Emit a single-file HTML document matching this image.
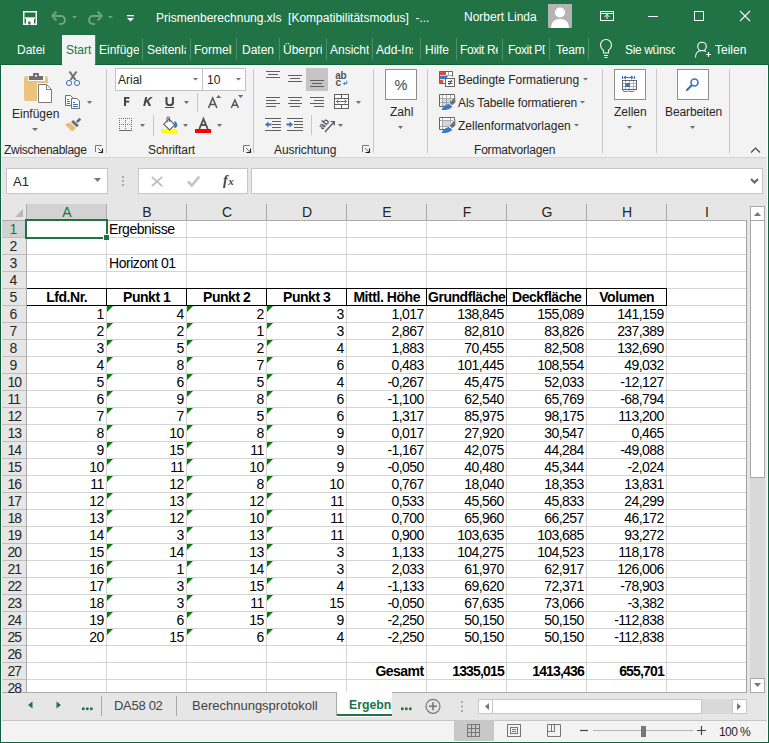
<!DOCTYPE html><html><head><meta charset="utf-8"><style>
*{margin:0;padding:0;box-sizing:border-box}
html,body{width:769px;height:743px;overflow:hidden;background:#e6e6e6;font-family:"Liberation Sans",sans-serif}
.ab{position:absolute}
.t{position:absolute;white-space:nowrap;line-height:1}
.clip{position:absolute;overflow:hidden;white-space:nowrap;line-height:1}
.c{position:absolute;font-size:13.33px;color:#000;white-space:nowrap;line-height:1}
.r{text-align:right}
.tri{position:absolute;width:0;height:0;border-top:6px solid #008000;border-right:6px solid transparent}
svg{position:absolute;left:0;top:0}
</style></head><body>

<div class="ab" style="left:0px;top:0px;width:769px;height:65px;background:#217346"></div>
<div class="ab" style="left:1px;top:65px;width:766px;height:92px;background:#f3f3f3"></div>
<div class="ab" style="left:1px;top:157px;width:766px;height:1px;background:#d5d5d5"></div>
<div class="ab" style="left:62px;top:35px;width:33px;height:30px;background:#f3f3f3"></div>
<div class="t" style="left:156px;top:12px;font-size:12px;color:#fff;">Prismenberechnung.xls&nbsp; [Kompatibilitätsmodus]&nbsp; -...</div>
<div class="t" style="left:464px;top:11px;font-size:12px;color:#fff;">Norbert Linda</div>
<div class="clip" style="left:17px;top:40px;padding-top:4px;width:43px;height:20px;font-size:12px;color:#fff;letter-spacing:0px">Datei</div>
<div class="clip" style="left:99px;top:40px;padding-top:4px;width:40px;height:20px;font-size:12px;color:#fff;letter-spacing:0px">Einfügen</div>
<div class="clip" style="left:147px;top:40px;padding-top:4px;width:39px;height:20px;font-size:12px;color:#fff;letter-spacing:0px">Seitenlayout</div>
<div class="clip" style="left:194px;top:40px;padding-top:4px;width:38px;height:20px;font-size:12px;color:#fff;letter-spacing:0px">Formeln</div>
<div class="clip" style="left:242px;top:40px;padding-top:4px;width:33px;height:20px;font-size:12px;color:#fff;letter-spacing:0px">Daten</div>
<div class="clip" style="left:283px;top:40px;padding-top:4px;width:39px;height:20px;font-size:12px;color:#fff;letter-spacing:0px">Überprüfen</div>
<div class="clip" style="left:330px;top:40px;padding-top:4px;width:39px;height:20px;font-size:12px;color:#fff;letter-spacing:0px">Ansicht</div>
<div class="clip" style="left:376px;top:40px;padding-top:4px;width:37px;height:20px;font-size:12px;color:#fff;letter-spacing:0px">Add-Ins</div>
<div class="clip" style="left:425px;top:40px;padding-top:4px;width:27px;height:20px;font-size:12px;color:#fff;letter-spacing:0px">Hilfe</div>
<div class="clip" style="left:460px;top:40px;padding-top:4px;width:38px;height:20px;font-size:12px;color:#fff;letter-spacing:-0.4px">Foxit Reader</div>
<div class="clip" style="left:508px;top:40px;padding-top:4px;width:37px;height:20px;font-size:12px;color:#fff;letter-spacing:-0.5px">Foxit PDF</div>
<div class="clip" style="left:556px;top:40px;padding-top:4px;width:29px;height:20px;font-size:12px;color:#fff;letter-spacing:-0.2px">Team</div>
<div class="t" style="left:66px;top:44px;font-size:12px;color:#217346;">Start</div>
<div class="ab" style="left:142px;top:38px;width:1px;height:22px;background:#4d8f6b"></div>
<div class="ab" style="left:190px;top:38px;width:1px;height:22px;background:#4d8f6b"></div>
<div class="ab" style="left:236px;top:38px;width:1px;height:22px;background:#4d8f6b"></div>
<div class="ab" style="left:279px;top:38px;width:1px;height:22px;background:#4d8f6b"></div>
<div class="ab" style="left:326px;top:38px;width:1px;height:22px;background:#4d8f6b"></div>
<div class="ab" style="left:372px;top:38px;width:1px;height:22px;background:#4d8f6b"></div>
<div class="ab" style="left:420px;top:38px;width:1px;height:22px;background:#4d8f6b"></div>
<div class="ab" style="left:456px;top:38px;width:1px;height:22px;background:#4d8f6b"></div>
<div class="ab" style="left:502px;top:38px;width:1px;height:22px;background:#4d8f6b"></div>
<div class="ab" style="left:549px;top:38px;width:1px;height:22px;background:#4d8f6b"></div>
<div class="ab" style="left:588px;top:38px;width:1px;height:22px;background:#4d8f6b"></div>
<div class="clip" style="left:625px;top:40px;padding-top:4px;width:50px;height:20px;font-size:12px;color:#fff;letter-spacing:-0.35px">Sie wünschen</div>
<div class="t" style="left:715px;top:44px;font-size:12px;color:#fff;">Teilen</div>
<div class="ab" style="left:106px;top:69px;width:1px;height:84px;background:#c8c8c8"></div>
<div class="ab" style="left:253px;top:69px;width:1px;height:84px;background:#c8c8c8"></div>
<div class="ab" style="left:373px;top:69px;width:1px;height:84px;background:#c8c8c8"></div>
<div class="ab" style="left:427px;top:69px;width:1px;height:84px;background:#c8c8c8"></div>
<div class="ab" style="left:602px;top:69px;width:1px;height:84px;background:#c8c8c8"></div>
<div class="ab" style="left:656px;top:69px;width:1px;height:84px;background:#c8c8c8"></div>
<div class="ab" style="left:729px;top:69px;width:1px;height:84px;background:#c8c8c8"></div>
<div class="t" style="left:12px;top:108px;font-size:12px;color:#262626;">Einfügen</div>
<div class="t" style="left:4px;top:144px;font-size:12px;color:#262626;letter-spacing:-0.3px">Zwischenablage</div>
<div class="ab" style="left:115px;top:68px;width:131px;height:23px;background:#fff;border:1px solid #c1c1c1"></div>
<div class="ab" style="left:202px;top:68px;width:1px;height:23px;background:#c1c1c1"></div>
<div class="t" style="left:118px;top:74px;font-size:12px;color:#262626;">Arial</div>
<div class="t" style="left:207px;top:74px;font-size:12px;color:#262626;">10</div>
<div class="ab" style="left:165px;top:107px;width:9px;height:1px;background:#444"></div>
<div class="ab" style="left:197px;top:93px;width:1px;height:19px;background:#c8c8c8"></div>
<div class="ab" style="left:119px;top:130px;width:13px;height:1px;background:#6b6b6b"></div>
<div class="ab" style="left:153px;top:115px;width:1px;height:21px;background:#c8c8c8"></div>
<div class="ab" style="left:161px;top:129px;width:16px;height:4px;background:#ffff00"></div>
<div class="ab" style="left:195px;top:129px;width:16px;height:4px;background:#ff0000"></div>
<div class="t" style="left:148px;top:144px;font-size:12px;color:#262626;letter-spacing:-0.1px">Schriftart</div>
<div class="ab" style="left:306px;top:68px;width:22px;height:23px;background:#c5c5c5"></div>
<div class="ab" style="left:311px;top:115px;width:1px;height:20px;background:#c8c8c8"></div>
<div class="t" style="left:274px;top:144px;font-size:12px;color:#262626;letter-spacing:-0.1px">Ausrichtung</div>
<div class="ab" style="left:385px;top:69px;width:32px;height:31px;background:#fff;border:1px solid #8f8f8f"></div>
<div class="t" style="left:394.5px;top:78px;font-size:14.5px;color:#444;">%</div>
<div class="t" style="left:390px;top:106px;font-size:12px;color:#262626;">Zahl</div>
<div class="t" style="left:458px;top:74px;font-size:12px;color:#262626;letter-spacing:-0.05px">Bedingte Formatierung</div>
<div class="t" style="left:458px;top:97px;font-size:12px;color:#262626;letter-spacing:-0.12px">Als Tabelle formatieren</div>
<div class="t" style="left:458px;top:120px;font-size:12px;color:#262626;">Zellenformatvorlagen</div>
<div class="t" style="left:474px;top:144px;font-size:12px;color:#262626;letter-spacing:-0.2px">Formatvorlagen</div>
<div class="ab" style="left:614px;top:69px;width:32px;height:31px;background:#fff;border:1px solid #8f8f8f"></div>
<div class="t" style="left:614px;top:106px;font-size:12px;color:#262626;">Zellen</div>
<div class="ab" style="left:677px;top:69px;width:32px;height:31px;background:#fff;border:1px solid #8f8f8f"></div>
<div class="t" style="left:665px;top:106px;font-size:12px;color:#262626;letter-spacing:-0.1px">Bearbeiten</div>
<div class="ab" style="left:6px;top:168px;width:102px;height:26px;background:#fff;border:1px solid #c6c6c6"></div>
<div class="t" style="left:13px;top:175px;font-size:13px;color:#262626;">A1</div>
<div class="ab" style="left:138px;top:168px;width:110px;height:26px;background:#fff;border:1px solid #c6c6c6"></div>
<div class="ab" style="left:251px;top:168px;width:512px;height:26px;background:#fff;border:1px solid #c6c6c6"></div>
<div class="ab" style="left:1px;top:204px;width:746px;height:16px;background:#e6e6e6"></div>
<div class="ab" style="left:26px;top:204px;width:81px;height:16px;background:#d2d2d2"></div>
<div class="ab" style="left:27px;top:221px;width:720px;height:471px;background:#fff"></div>
<div class="ab" style="left:1px;top:221px;width:25px;height:471px;background:#e6e6e6"></div>
<div class="ab" style="left:1px;top:221px;width:25px;height:16px;background:#d2d2d2"></div>
<div class="ab" style="left:1px;top:220px;width:746px;height:1px;background:#ababab"></div>
<div class="ab" style="left:26px;top:204px;width:1px;height:488px;background:#ababab"></div>
<div class="ab" style="left:106px;top:221px;width:1px;height:471px;background:#d4d4d4"></div>
<div class="ab" style="left:106px;top:204px;width:1px;height:16px;background:#ababab"></div>
<div class="ab" style="left:186px;top:221px;width:1px;height:471px;background:#d4d4d4"></div>
<div class="ab" style="left:186px;top:204px;width:1px;height:16px;background:#ababab"></div>
<div class="ab" style="left:266px;top:221px;width:1px;height:471px;background:#d4d4d4"></div>
<div class="ab" style="left:266px;top:204px;width:1px;height:16px;background:#ababab"></div>
<div class="ab" style="left:346px;top:221px;width:1px;height:471px;background:#d4d4d4"></div>
<div class="ab" style="left:346px;top:204px;width:1px;height:16px;background:#ababab"></div>
<div class="ab" style="left:426px;top:221px;width:1px;height:471px;background:#d4d4d4"></div>
<div class="ab" style="left:426px;top:204px;width:1px;height:16px;background:#ababab"></div>
<div class="ab" style="left:506px;top:221px;width:1px;height:471px;background:#d4d4d4"></div>
<div class="ab" style="left:506px;top:204px;width:1px;height:16px;background:#ababab"></div>
<div class="ab" style="left:586px;top:221px;width:1px;height:471px;background:#d4d4d4"></div>
<div class="ab" style="left:586px;top:204px;width:1px;height:16px;background:#ababab"></div>
<div class="ab" style="left:666px;top:221px;width:1px;height:471px;background:#d4d4d4"></div>
<div class="ab" style="left:666px;top:204px;width:1px;height:16px;background:#ababab"></div>
<div class="ab" style="left:27px;top:237px;width:720px;height:1px;background:#d4d4d4"></div>
<div class="ab" style="left:1px;top:237px;width:25px;height:1px;background:#bfbfbf"></div>
<div class="ab" style="left:27px;top:254px;width:720px;height:1px;background:#d4d4d4"></div>
<div class="ab" style="left:1px;top:254px;width:25px;height:1px;background:#bfbfbf"></div>
<div class="ab" style="left:27px;top:271px;width:720px;height:1px;background:#d4d4d4"></div>
<div class="ab" style="left:1px;top:271px;width:25px;height:1px;background:#bfbfbf"></div>
<div class="ab" style="left:27px;top:288px;width:720px;height:1px;background:#d4d4d4"></div>
<div class="ab" style="left:1px;top:288px;width:25px;height:1px;background:#bfbfbf"></div>
<div class="ab" style="left:27px;top:305px;width:720px;height:1px;background:#d4d4d4"></div>
<div class="ab" style="left:1px;top:305px;width:25px;height:1px;background:#bfbfbf"></div>
<div class="ab" style="left:27px;top:322px;width:720px;height:1px;background:#d4d4d4"></div>
<div class="ab" style="left:1px;top:322px;width:25px;height:1px;background:#bfbfbf"></div>
<div class="ab" style="left:27px;top:339px;width:720px;height:1px;background:#d4d4d4"></div>
<div class="ab" style="left:1px;top:339px;width:25px;height:1px;background:#bfbfbf"></div>
<div class="ab" style="left:27px;top:356px;width:720px;height:1px;background:#d4d4d4"></div>
<div class="ab" style="left:1px;top:356px;width:25px;height:1px;background:#bfbfbf"></div>
<div class="ab" style="left:27px;top:373px;width:720px;height:1px;background:#d4d4d4"></div>
<div class="ab" style="left:1px;top:373px;width:25px;height:1px;background:#bfbfbf"></div>
<div class="ab" style="left:27px;top:390px;width:720px;height:1px;background:#d4d4d4"></div>
<div class="ab" style="left:1px;top:390px;width:25px;height:1px;background:#bfbfbf"></div>
<div class="ab" style="left:27px;top:407px;width:720px;height:1px;background:#d4d4d4"></div>
<div class="ab" style="left:1px;top:407px;width:25px;height:1px;background:#bfbfbf"></div>
<div class="ab" style="left:27px;top:424px;width:720px;height:1px;background:#d4d4d4"></div>
<div class="ab" style="left:1px;top:424px;width:25px;height:1px;background:#bfbfbf"></div>
<div class="ab" style="left:27px;top:441px;width:720px;height:1px;background:#d4d4d4"></div>
<div class="ab" style="left:1px;top:441px;width:25px;height:1px;background:#bfbfbf"></div>
<div class="ab" style="left:27px;top:458px;width:720px;height:1px;background:#d4d4d4"></div>
<div class="ab" style="left:1px;top:458px;width:25px;height:1px;background:#bfbfbf"></div>
<div class="ab" style="left:27px;top:475px;width:720px;height:1px;background:#d4d4d4"></div>
<div class="ab" style="left:1px;top:475px;width:25px;height:1px;background:#bfbfbf"></div>
<div class="ab" style="left:27px;top:492px;width:720px;height:1px;background:#d4d4d4"></div>
<div class="ab" style="left:1px;top:492px;width:25px;height:1px;background:#bfbfbf"></div>
<div class="ab" style="left:27px;top:509px;width:720px;height:1px;background:#d4d4d4"></div>
<div class="ab" style="left:1px;top:509px;width:25px;height:1px;background:#bfbfbf"></div>
<div class="ab" style="left:27px;top:526px;width:720px;height:1px;background:#d4d4d4"></div>
<div class="ab" style="left:1px;top:526px;width:25px;height:1px;background:#bfbfbf"></div>
<div class="ab" style="left:27px;top:543px;width:720px;height:1px;background:#d4d4d4"></div>
<div class="ab" style="left:1px;top:543px;width:25px;height:1px;background:#bfbfbf"></div>
<div class="ab" style="left:27px;top:560px;width:720px;height:1px;background:#d4d4d4"></div>
<div class="ab" style="left:1px;top:560px;width:25px;height:1px;background:#bfbfbf"></div>
<div class="ab" style="left:27px;top:577px;width:720px;height:1px;background:#d4d4d4"></div>
<div class="ab" style="left:1px;top:577px;width:25px;height:1px;background:#bfbfbf"></div>
<div class="ab" style="left:27px;top:594px;width:720px;height:1px;background:#d4d4d4"></div>
<div class="ab" style="left:1px;top:594px;width:25px;height:1px;background:#bfbfbf"></div>
<div class="ab" style="left:27px;top:611px;width:720px;height:1px;background:#d4d4d4"></div>
<div class="ab" style="left:1px;top:611px;width:25px;height:1px;background:#bfbfbf"></div>
<div class="ab" style="left:27px;top:628px;width:720px;height:1px;background:#d4d4d4"></div>
<div class="ab" style="left:1px;top:628px;width:25px;height:1px;background:#bfbfbf"></div>
<div class="ab" style="left:27px;top:645px;width:720px;height:1px;background:#d4d4d4"></div>
<div class="ab" style="left:1px;top:645px;width:25px;height:1px;background:#bfbfbf"></div>
<div class="ab" style="left:27px;top:662px;width:720px;height:1px;background:#d4d4d4"></div>
<div class="ab" style="left:1px;top:662px;width:25px;height:1px;background:#bfbfbf"></div>
<div class="ab" style="left:27px;top:679px;width:720px;height:1px;background:#d4d4d4"></div>
<div class="ab" style="left:1px;top:679px;width:25px;height:1px;background:#bfbfbf"></div>
<div class="ab" style="left:746px;top:220px;width:1px;height:473px;background:#a0a0a0"></div>
<div class="ab" style="left:1px;top:692px;width:746px;height:1px;background:#ababab"></div>
<div class="c" style="left:27px;width:80px;text-align:center;top:205px;color:#217346;font-size:14px">A</div>
<div class="c" style="left:107px;width:80px;text-align:center;top:205px;color:#262626;font-size:14px">B</div>
<div class="c" style="left:187px;width:80px;text-align:center;top:205px;color:#262626;font-size:14px">C</div>
<div class="c" style="left:267px;width:80px;text-align:center;top:205px;color:#262626;font-size:14px">D</div>
<div class="c" style="left:347px;width:80px;text-align:center;top:205px;color:#262626;font-size:14px">E</div>
<div class="c" style="left:427px;width:80px;text-align:center;top:205px;color:#262626;font-size:14px">F</div>
<div class="c" style="left:507px;width:80px;text-align:center;top:205px;color:#262626;font-size:14px">G</div>
<div class="c" style="left:587px;width:80px;text-align:center;top:205px;color:#262626;font-size:14px">H</div>
<div class="c" style="left:667px;width:80px;text-align:center;top:205px;color:#262626;font-size:14px">I</div>
<div class="c" style="left:0.6px;width:25px;text-align:center;top:222px;color:#217346;font-size:14px;letter-spacing:-0.7px">1</div>
<div class="c" style="left:0.6px;width:25px;text-align:center;top:239px;color:#262626;font-size:14px;letter-spacing:-0.7px">2</div>
<div class="c" style="left:0.6px;width:25px;text-align:center;top:256px;color:#262626;font-size:14px;letter-spacing:-0.7px">3</div>
<div class="c" style="left:0.6px;width:25px;text-align:center;top:273px;color:#262626;font-size:14px;letter-spacing:-0.7px">4</div>
<div class="c" style="left:0.6px;width:25px;text-align:center;top:290px;color:#262626;font-size:14px;letter-spacing:-0.7px">5</div>
<div class="c" style="left:0.6px;width:25px;text-align:center;top:307px;color:#262626;font-size:14px;letter-spacing:-0.7px">6</div>
<div class="c" style="left:0.6px;width:25px;text-align:center;top:324px;color:#262626;font-size:14px;letter-spacing:-0.7px">7</div>
<div class="c" style="left:0.6px;width:25px;text-align:center;top:341px;color:#262626;font-size:14px;letter-spacing:-0.7px">8</div>
<div class="c" style="left:0.6px;width:25px;text-align:center;top:358px;color:#262626;font-size:14px;letter-spacing:-0.7px">9</div>
<div class="c" style="left:7.5px;top:375px;color:#262626;font-size:14px;letter-spacing:-1.1px">10</div>
<div class="c" style="left:7.5px;top:392px;color:#262626;font-size:14px;letter-spacing:-1.1px">11</div>
<div class="c" style="left:7.5px;top:409px;color:#262626;font-size:14px;letter-spacing:-1.1px">12</div>
<div class="c" style="left:7.5px;top:426px;color:#262626;font-size:14px;letter-spacing:-1.1px">13</div>
<div class="c" style="left:7.5px;top:443px;color:#262626;font-size:14px;letter-spacing:-1.1px">14</div>
<div class="c" style="left:7.5px;top:460px;color:#262626;font-size:14px;letter-spacing:-1.1px">15</div>
<div class="c" style="left:7.5px;top:477px;color:#262626;font-size:14px;letter-spacing:-1.1px">16</div>
<div class="c" style="left:7.5px;top:494px;color:#262626;font-size:14px;letter-spacing:-1.1px">17</div>
<div class="c" style="left:7.5px;top:511px;color:#262626;font-size:14px;letter-spacing:-1.1px">18</div>
<div class="c" style="left:7.5px;top:528px;color:#262626;font-size:14px;letter-spacing:-1.1px">19</div>
<div class="c" style="left:7.5px;top:545px;color:#262626;font-size:14px;letter-spacing:-1.1px">20</div>
<div class="c" style="left:7.5px;top:562px;color:#262626;font-size:14px;letter-spacing:-1.1px">21</div>
<div class="c" style="left:7.5px;top:579px;color:#262626;font-size:14px;letter-spacing:-1.1px">22</div>
<div class="c" style="left:7.5px;top:596px;color:#262626;font-size:14px;letter-spacing:-1.1px">23</div>
<div class="c" style="left:7.5px;top:613px;color:#262626;font-size:14px;letter-spacing:-1.1px">24</div>
<div class="c" style="left:7.5px;top:630px;color:#262626;font-size:14px;letter-spacing:-1.1px">25</div>
<div class="c" style="left:7.5px;top:647px;color:#262626;font-size:14px;letter-spacing:-1.1px">26</div>
<div class="c" style="left:7.5px;top:664px;color:#262626;font-size:14px;letter-spacing:-1.1px">27</div>
<div class="c" style="left:7.5px;top:681px;color:#262626;font-size:14px;letter-spacing:-1.1px">28</div>
<div class="c" style="left:109px;top:222px;font-size:14px;letter-spacing:-0.45px;">Ergebnisse</div>
<div class="c" style="left:109px;top:256px;font-size:14px;letter-spacing:-0.45px;">Horizont 01</div>
<div class="c" style="left:26px;width:81.45px;text-align:center;top:290px;font-weight:bold;font-size:14px;letter-spacing:-0.45px;">Lfd.Nr.</div>
<div class="c" style="left:106px;width:81.45px;text-align:center;top:290px;font-weight:bold;font-size:14px;letter-spacing:-0.45px;">Punkt 1</div>
<div class="c" style="left:186px;width:81.45px;text-align:center;top:290px;font-weight:bold;font-size:14px;letter-spacing:-0.45px;">Punkt 2</div>
<div class="c" style="left:266px;width:81.45px;text-align:center;top:290px;font-weight:bold;font-size:14px;letter-spacing:-0.45px;">Punkt 3</div>
<div class="c" style="left:346px;width:81.45px;text-align:center;top:290px;font-weight:bold;font-size:14px;letter-spacing:-0.45px;">Mittl. Höhe</div>
<div class="c" style="left:426px;width:81.45px;text-align:center;top:290px;font-weight:bold;font-size:14px;letter-spacing:-0.45px;">Grundfläche</div>
<div class="c" style="left:506px;width:81.45px;text-align:center;top:290px;font-weight:bold;font-size:14px;letter-spacing:-0.45px;">Deckfläche</div>
<div class="c" style="left:586px;width:81.45px;text-align:center;top:290px;font-weight:bold;font-size:14px;letter-spacing:-0.45px;">Volumen</div>
<div class="c r" style="left:26px;width:77.60px;top:307px;font-size:14px;letter-spacing:-0.6px;">1</div>
<div class="c r" style="left:106px;width:77.60px;top:307px;font-size:14px;letter-spacing:-0.6px;">4</div>
<div class="c r" style="left:186px;width:77.60px;top:307px;font-size:14px;letter-spacing:-0.6px;">2</div>
<div class="c r" style="left:266px;width:77.60px;top:307px;font-size:14px;letter-spacing:-0.6px;">3</div>
<div class="c r" style="left:346px;width:77.60px;top:307px;font-size:14px;letter-spacing:-0.6px;">1,017</div>
<div class="c r" style="left:426px;width:77.60px;top:307px;font-size:14px;letter-spacing:-0.6px;">138,845</div>
<div class="c r" style="left:506px;width:77.60px;top:307px;font-size:14px;letter-spacing:-0.6px;">155,089</div>
<div class="c r" style="left:586px;width:77.60px;top:307px;font-size:14px;letter-spacing:-0.6px;">141,159</div>
<div class="tri" style="left:107px;top:306px"></div>
<div class="tri" style="left:187px;top:306px"></div>
<div class="tri" style="left:267px;top:306px"></div>
<div class="c r" style="left:26px;width:77.60px;top:324px;font-size:14px;letter-spacing:-0.6px;">2</div>
<div class="c r" style="left:106px;width:77.60px;top:324px;font-size:14px;letter-spacing:-0.6px;">2</div>
<div class="c r" style="left:186px;width:77.60px;top:324px;font-size:14px;letter-spacing:-0.6px;">1</div>
<div class="c r" style="left:266px;width:77.60px;top:324px;font-size:14px;letter-spacing:-0.6px;">3</div>
<div class="c r" style="left:346px;width:77.60px;top:324px;font-size:14px;letter-spacing:-0.6px;">2,867</div>
<div class="c r" style="left:426px;width:77.60px;top:324px;font-size:14px;letter-spacing:-0.6px;">82,810</div>
<div class="c r" style="left:506px;width:77.60px;top:324px;font-size:14px;letter-spacing:-0.6px;">83,826</div>
<div class="c r" style="left:586px;width:77.60px;top:324px;font-size:14px;letter-spacing:-0.6px;">237,389</div>
<div class="tri" style="left:107px;top:323px"></div>
<div class="tri" style="left:187px;top:323px"></div>
<div class="tri" style="left:267px;top:323px"></div>
<div class="c r" style="left:26px;width:77.60px;top:341px;font-size:14px;letter-spacing:-0.6px;">3</div>
<div class="c r" style="left:106px;width:77.60px;top:341px;font-size:14px;letter-spacing:-0.6px;">5</div>
<div class="c r" style="left:186px;width:77.60px;top:341px;font-size:14px;letter-spacing:-0.6px;">2</div>
<div class="c r" style="left:266px;width:77.60px;top:341px;font-size:14px;letter-spacing:-0.6px;">4</div>
<div class="c r" style="left:346px;width:77.60px;top:341px;font-size:14px;letter-spacing:-0.6px;">1,883</div>
<div class="c r" style="left:426px;width:77.60px;top:341px;font-size:14px;letter-spacing:-0.6px;">70,455</div>
<div class="c r" style="left:506px;width:77.60px;top:341px;font-size:14px;letter-spacing:-0.6px;">82,508</div>
<div class="c r" style="left:586px;width:77.60px;top:341px;font-size:14px;letter-spacing:-0.6px;">132,690</div>
<div class="tri" style="left:107px;top:340px"></div>
<div class="tri" style="left:187px;top:340px"></div>
<div class="tri" style="left:267px;top:340px"></div>
<div class="c r" style="left:26px;width:77.60px;top:358px;font-size:14px;letter-spacing:-0.6px;">4</div>
<div class="c r" style="left:106px;width:77.60px;top:358px;font-size:14px;letter-spacing:-0.6px;">8</div>
<div class="c r" style="left:186px;width:77.60px;top:358px;font-size:14px;letter-spacing:-0.6px;">7</div>
<div class="c r" style="left:266px;width:77.60px;top:358px;font-size:14px;letter-spacing:-0.6px;">6</div>
<div class="c r" style="left:346px;width:77.60px;top:358px;font-size:14px;letter-spacing:-0.6px;">0,483</div>
<div class="c r" style="left:426px;width:77.60px;top:358px;font-size:14px;letter-spacing:-0.6px;">101,445</div>
<div class="c r" style="left:506px;width:77.60px;top:358px;font-size:14px;letter-spacing:-0.6px;">108,554</div>
<div class="c r" style="left:586px;width:77.60px;top:358px;font-size:14px;letter-spacing:-0.6px;">49,032</div>
<div class="tri" style="left:107px;top:357px"></div>
<div class="tri" style="left:187px;top:357px"></div>
<div class="tri" style="left:267px;top:357px"></div>
<div class="c r" style="left:26px;width:77.60px;top:375px;font-size:14px;letter-spacing:-0.6px;">5</div>
<div class="c r" style="left:106px;width:77.60px;top:375px;font-size:14px;letter-spacing:-0.6px;">6</div>
<div class="c r" style="left:186px;width:77.60px;top:375px;font-size:14px;letter-spacing:-0.6px;">5</div>
<div class="c r" style="left:266px;width:77.60px;top:375px;font-size:14px;letter-spacing:-0.6px;">4</div>
<div class="c r" style="left:346px;width:77.60px;top:375px;font-size:14px;letter-spacing:-0.6px;">-0,267</div>
<div class="c r" style="left:426px;width:77.60px;top:375px;font-size:14px;letter-spacing:-0.6px;">45,475</div>
<div class="c r" style="left:506px;width:77.60px;top:375px;font-size:14px;letter-spacing:-0.6px;">52,033</div>
<div class="c r" style="left:586px;width:77.60px;top:375px;font-size:14px;letter-spacing:-0.6px;">-12,127</div>
<div class="tri" style="left:107px;top:374px"></div>
<div class="tri" style="left:187px;top:374px"></div>
<div class="tri" style="left:267px;top:374px"></div>
<div class="c r" style="left:26px;width:77.60px;top:392px;font-size:14px;letter-spacing:-0.6px;">6</div>
<div class="c r" style="left:106px;width:77.60px;top:392px;font-size:14px;letter-spacing:-0.6px;">9</div>
<div class="c r" style="left:186px;width:77.60px;top:392px;font-size:14px;letter-spacing:-0.6px;">8</div>
<div class="c r" style="left:266px;width:77.60px;top:392px;font-size:14px;letter-spacing:-0.6px;">6</div>
<div class="c r" style="left:346px;width:77.60px;top:392px;font-size:14px;letter-spacing:-0.6px;">-1,100</div>
<div class="c r" style="left:426px;width:77.60px;top:392px;font-size:14px;letter-spacing:-0.6px;">62,540</div>
<div class="c r" style="left:506px;width:77.60px;top:392px;font-size:14px;letter-spacing:-0.6px;">65,769</div>
<div class="c r" style="left:586px;width:77.60px;top:392px;font-size:14px;letter-spacing:-0.6px;">-68,794</div>
<div class="tri" style="left:107px;top:391px"></div>
<div class="tri" style="left:187px;top:391px"></div>
<div class="tri" style="left:267px;top:391px"></div>
<div class="c r" style="left:26px;width:77.60px;top:409px;font-size:14px;letter-spacing:-0.6px;">7</div>
<div class="c r" style="left:106px;width:77.60px;top:409px;font-size:14px;letter-spacing:-0.6px;">7</div>
<div class="c r" style="left:186px;width:77.60px;top:409px;font-size:14px;letter-spacing:-0.6px;">5</div>
<div class="c r" style="left:266px;width:77.60px;top:409px;font-size:14px;letter-spacing:-0.6px;">6</div>
<div class="c r" style="left:346px;width:77.60px;top:409px;font-size:14px;letter-spacing:-0.6px;">1,317</div>
<div class="c r" style="left:426px;width:77.60px;top:409px;font-size:14px;letter-spacing:-0.6px;">85,975</div>
<div class="c r" style="left:506px;width:77.60px;top:409px;font-size:14px;letter-spacing:-0.6px;">98,175</div>
<div class="c r" style="left:586px;width:77.60px;top:409px;font-size:14px;letter-spacing:-0.6px;">113,200</div>
<div class="tri" style="left:107px;top:408px"></div>
<div class="tri" style="left:187px;top:408px"></div>
<div class="tri" style="left:267px;top:408px"></div>
<div class="c r" style="left:26px;width:77.60px;top:426px;font-size:14px;letter-spacing:-0.6px;">8</div>
<div class="c r" style="left:106px;width:77.60px;top:426px;font-size:14px;letter-spacing:-0.6px;">10</div>
<div class="c r" style="left:186px;width:77.60px;top:426px;font-size:14px;letter-spacing:-0.6px;">8</div>
<div class="c r" style="left:266px;width:77.60px;top:426px;font-size:14px;letter-spacing:-0.6px;">9</div>
<div class="c r" style="left:346px;width:77.60px;top:426px;font-size:14px;letter-spacing:-0.6px;">0,017</div>
<div class="c r" style="left:426px;width:77.60px;top:426px;font-size:14px;letter-spacing:-0.6px;">27,920</div>
<div class="c r" style="left:506px;width:77.60px;top:426px;font-size:14px;letter-spacing:-0.6px;">30,547</div>
<div class="c r" style="left:586px;width:77.60px;top:426px;font-size:14px;letter-spacing:-0.6px;">0,465</div>
<div class="tri" style="left:107px;top:425px"></div>
<div class="tri" style="left:187px;top:425px"></div>
<div class="tri" style="left:267px;top:425px"></div>
<div class="c r" style="left:26px;width:77.60px;top:443px;font-size:14px;letter-spacing:-0.6px;">9</div>
<div class="c r" style="left:106px;width:77.60px;top:443px;font-size:14px;letter-spacing:-0.6px;">15</div>
<div class="c r" style="left:186px;width:77.60px;top:443px;font-size:14px;letter-spacing:-0.6px;">11</div>
<div class="c r" style="left:266px;width:77.60px;top:443px;font-size:14px;letter-spacing:-0.6px;">9</div>
<div class="c r" style="left:346px;width:77.60px;top:443px;font-size:14px;letter-spacing:-0.6px;">-1,167</div>
<div class="c r" style="left:426px;width:77.60px;top:443px;font-size:14px;letter-spacing:-0.6px;">42,075</div>
<div class="c r" style="left:506px;width:77.60px;top:443px;font-size:14px;letter-spacing:-0.6px;">44,284</div>
<div class="c r" style="left:586px;width:77.60px;top:443px;font-size:14px;letter-spacing:-0.6px;">-49,088</div>
<div class="tri" style="left:107px;top:442px"></div>
<div class="tri" style="left:187px;top:442px"></div>
<div class="tri" style="left:267px;top:442px"></div>
<div class="c r" style="left:26px;width:77.60px;top:460px;font-size:14px;letter-spacing:-0.6px;">10</div>
<div class="c r" style="left:106px;width:77.60px;top:460px;font-size:14px;letter-spacing:-0.6px;">11</div>
<div class="c r" style="left:186px;width:77.60px;top:460px;font-size:14px;letter-spacing:-0.6px;">10</div>
<div class="c r" style="left:266px;width:77.60px;top:460px;font-size:14px;letter-spacing:-0.6px;">9</div>
<div class="c r" style="left:346px;width:77.60px;top:460px;font-size:14px;letter-spacing:-0.6px;">-0,050</div>
<div class="c r" style="left:426px;width:77.60px;top:460px;font-size:14px;letter-spacing:-0.6px;">40,480</div>
<div class="c r" style="left:506px;width:77.60px;top:460px;font-size:14px;letter-spacing:-0.6px;">45,344</div>
<div class="c r" style="left:586px;width:77.60px;top:460px;font-size:14px;letter-spacing:-0.6px;">-2,024</div>
<div class="tri" style="left:107px;top:459px"></div>
<div class="tri" style="left:187px;top:459px"></div>
<div class="tri" style="left:267px;top:459px"></div>
<div class="c r" style="left:26px;width:77.60px;top:477px;font-size:14px;letter-spacing:-0.6px;">11</div>
<div class="c r" style="left:106px;width:77.60px;top:477px;font-size:14px;letter-spacing:-0.6px;">12</div>
<div class="c r" style="left:186px;width:77.60px;top:477px;font-size:14px;letter-spacing:-0.6px;">8</div>
<div class="c r" style="left:266px;width:77.60px;top:477px;font-size:14px;letter-spacing:-0.6px;">10</div>
<div class="c r" style="left:346px;width:77.60px;top:477px;font-size:14px;letter-spacing:-0.6px;">0,767</div>
<div class="c r" style="left:426px;width:77.60px;top:477px;font-size:14px;letter-spacing:-0.6px;">18,040</div>
<div class="c r" style="left:506px;width:77.60px;top:477px;font-size:14px;letter-spacing:-0.6px;">18,353</div>
<div class="c r" style="left:586px;width:77.60px;top:477px;font-size:14px;letter-spacing:-0.6px;">13,831</div>
<div class="tri" style="left:107px;top:476px"></div>
<div class="tri" style="left:187px;top:476px"></div>
<div class="tri" style="left:267px;top:476px"></div>
<div class="c r" style="left:26px;width:77.60px;top:494px;font-size:14px;letter-spacing:-0.6px;">12</div>
<div class="c r" style="left:106px;width:77.60px;top:494px;font-size:14px;letter-spacing:-0.6px;">13</div>
<div class="c r" style="left:186px;width:77.60px;top:494px;font-size:14px;letter-spacing:-0.6px;">12</div>
<div class="c r" style="left:266px;width:77.60px;top:494px;font-size:14px;letter-spacing:-0.6px;">11</div>
<div class="c r" style="left:346px;width:77.60px;top:494px;font-size:14px;letter-spacing:-0.6px;">0,533</div>
<div class="c r" style="left:426px;width:77.60px;top:494px;font-size:14px;letter-spacing:-0.6px;">45,560</div>
<div class="c r" style="left:506px;width:77.60px;top:494px;font-size:14px;letter-spacing:-0.6px;">45,833</div>
<div class="c r" style="left:586px;width:77.60px;top:494px;font-size:14px;letter-spacing:-0.6px;">24,299</div>
<div class="tri" style="left:107px;top:493px"></div>
<div class="tri" style="left:187px;top:493px"></div>
<div class="tri" style="left:267px;top:493px"></div>
<div class="c r" style="left:26px;width:77.60px;top:511px;font-size:14px;letter-spacing:-0.6px;">13</div>
<div class="c r" style="left:106px;width:77.60px;top:511px;font-size:14px;letter-spacing:-0.6px;">12</div>
<div class="c r" style="left:186px;width:77.60px;top:511px;font-size:14px;letter-spacing:-0.6px;">10</div>
<div class="c r" style="left:266px;width:77.60px;top:511px;font-size:14px;letter-spacing:-0.6px;">11</div>
<div class="c r" style="left:346px;width:77.60px;top:511px;font-size:14px;letter-spacing:-0.6px;">0,700</div>
<div class="c r" style="left:426px;width:77.60px;top:511px;font-size:14px;letter-spacing:-0.6px;">65,960</div>
<div class="c r" style="left:506px;width:77.60px;top:511px;font-size:14px;letter-spacing:-0.6px;">66,257</div>
<div class="c r" style="left:586px;width:77.60px;top:511px;font-size:14px;letter-spacing:-0.6px;">46,172</div>
<div class="tri" style="left:107px;top:510px"></div>
<div class="tri" style="left:187px;top:510px"></div>
<div class="tri" style="left:267px;top:510px"></div>
<div class="c r" style="left:26px;width:77.60px;top:528px;font-size:14px;letter-spacing:-0.6px;">14</div>
<div class="c r" style="left:106px;width:77.60px;top:528px;font-size:14px;letter-spacing:-0.6px;">3</div>
<div class="c r" style="left:186px;width:77.60px;top:528px;font-size:14px;letter-spacing:-0.6px;">13</div>
<div class="c r" style="left:266px;width:77.60px;top:528px;font-size:14px;letter-spacing:-0.6px;">11</div>
<div class="c r" style="left:346px;width:77.60px;top:528px;font-size:14px;letter-spacing:-0.6px;">0,900</div>
<div class="c r" style="left:426px;width:77.60px;top:528px;font-size:14px;letter-spacing:-0.6px;">103,635</div>
<div class="c r" style="left:506px;width:77.60px;top:528px;font-size:14px;letter-spacing:-0.6px;">103,685</div>
<div class="c r" style="left:586px;width:77.60px;top:528px;font-size:14px;letter-spacing:-0.6px;">93,272</div>
<div class="tri" style="left:107px;top:527px"></div>
<div class="tri" style="left:187px;top:527px"></div>
<div class="tri" style="left:267px;top:527px"></div>
<div class="c r" style="left:26px;width:77.60px;top:545px;font-size:14px;letter-spacing:-0.6px;">15</div>
<div class="c r" style="left:106px;width:77.60px;top:545px;font-size:14px;letter-spacing:-0.6px;">14</div>
<div class="c r" style="left:186px;width:77.60px;top:545px;font-size:14px;letter-spacing:-0.6px;">13</div>
<div class="c r" style="left:266px;width:77.60px;top:545px;font-size:14px;letter-spacing:-0.6px;">3</div>
<div class="c r" style="left:346px;width:77.60px;top:545px;font-size:14px;letter-spacing:-0.6px;">1,133</div>
<div class="c r" style="left:426px;width:77.60px;top:545px;font-size:14px;letter-spacing:-0.6px;">104,275</div>
<div class="c r" style="left:506px;width:77.60px;top:545px;font-size:14px;letter-spacing:-0.6px;">104,523</div>
<div class="c r" style="left:586px;width:77.60px;top:545px;font-size:14px;letter-spacing:-0.6px;">118,178</div>
<div class="tri" style="left:107px;top:544px"></div>
<div class="tri" style="left:187px;top:544px"></div>
<div class="tri" style="left:267px;top:544px"></div>
<div class="c r" style="left:26px;width:77.60px;top:562px;font-size:14px;letter-spacing:-0.6px;">16</div>
<div class="c r" style="left:106px;width:77.60px;top:562px;font-size:14px;letter-spacing:-0.6px;">1</div>
<div class="c r" style="left:186px;width:77.60px;top:562px;font-size:14px;letter-spacing:-0.6px;">14</div>
<div class="c r" style="left:266px;width:77.60px;top:562px;font-size:14px;letter-spacing:-0.6px;">3</div>
<div class="c r" style="left:346px;width:77.60px;top:562px;font-size:14px;letter-spacing:-0.6px;">2,033</div>
<div class="c r" style="left:426px;width:77.60px;top:562px;font-size:14px;letter-spacing:-0.6px;">61,970</div>
<div class="c r" style="left:506px;width:77.60px;top:562px;font-size:14px;letter-spacing:-0.6px;">62,917</div>
<div class="c r" style="left:586px;width:77.60px;top:562px;font-size:14px;letter-spacing:-0.6px;">126,006</div>
<div class="tri" style="left:107px;top:561px"></div>
<div class="tri" style="left:187px;top:561px"></div>
<div class="tri" style="left:267px;top:561px"></div>
<div class="c r" style="left:26px;width:77.60px;top:579px;font-size:14px;letter-spacing:-0.6px;">17</div>
<div class="c r" style="left:106px;width:77.60px;top:579px;font-size:14px;letter-spacing:-0.6px;">3</div>
<div class="c r" style="left:186px;width:77.60px;top:579px;font-size:14px;letter-spacing:-0.6px;">15</div>
<div class="c r" style="left:266px;width:77.60px;top:579px;font-size:14px;letter-spacing:-0.6px;">4</div>
<div class="c r" style="left:346px;width:77.60px;top:579px;font-size:14px;letter-spacing:-0.6px;">-1,133</div>
<div class="c r" style="left:426px;width:77.60px;top:579px;font-size:14px;letter-spacing:-0.6px;">69,620</div>
<div class="c r" style="left:506px;width:77.60px;top:579px;font-size:14px;letter-spacing:-0.6px;">72,371</div>
<div class="c r" style="left:586px;width:77.60px;top:579px;font-size:14px;letter-spacing:-0.6px;">-78,903</div>
<div class="tri" style="left:107px;top:578px"></div>
<div class="tri" style="left:187px;top:578px"></div>
<div class="tri" style="left:267px;top:578px"></div>
<div class="c r" style="left:26px;width:77.60px;top:596px;font-size:14px;letter-spacing:-0.6px;">18</div>
<div class="c r" style="left:106px;width:77.60px;top:596px;font-size:14px;letter-spacing:-0.6px;">3</div>
<div class="c r" style="left:186px;width:77.60px;top:596px;font-size:14px;letter-spacing:-0.6px;">11</div>
<div class="c r" style="left:266px;width:77.60px;top:596px;font-size:14px;letter-spacing:-0.6px;">15</div>
<div class="c r" style="left:346px;width:77.60px;top:596px;font-size:14px;letter-spacing:-0.6px;">-0,050</div>
<div class="c r" style="left:426px;width:77.60px;top:596px;font-size:14px;letter-spacing:-0.6px;">67,635</div>
<div class="c r" style="left:506px;width:77.60px;top:596px;font-size:14px;letter-spacing:-0.6px;">73,066</div>
<div class="c r" style="left:586px;width:77.60px;top:596px;font-size:14px;letter-spacing:-0.6px;">-3,382</div>
<div class="tri" style="left:107px;top:595px"></div>
<div class="tri" style="left:187px;top:595px"></div>
<div class="tri" style="left:267px;top:595px"></div>
<div class="c r" style="left:26px;width:77.60px;top:613px;font-size:14px;letter-spacing:-0.6px;">19</div>
<div class="c r" style="left:106px;width:77.60px;top:613px;font-size:14px;letter-spacing:-0.6px;">6</div>
<div class="c r" style="left:186px;width:77.60px;top:613px;font-size:14px;letter-spacing:-0.6px;">15</div>
<div class="c r" style="left:266px;width:77.60px;top:613px;font-size:14px;letter-spacing:-0.6px;">9</div>
<div class="c r" style="left:346px;width:77.60px;top:613px;font-size:14px;letter-spacing:-0.6px;">-2,250</div>
<div class="c r" style="left:426px;width:77.60px;top:613px;font-size:14px;letter-spacing:-0.6px;">50,150</div>
<div class="c r" style="left:506px;width:77.60px;top:613px;font-size:14px;letter-spacing:-0.6px;">50,150</div>
<div class="c r" style="left:586px;width:77.60px;top:613px;font-size:14px;letter-spacing:-0.6px;">-112,838</div>
<div class="tri" style="left:107px;top:612px"></div>
<div class="tri" style="left:187px;top:612px"></div>
<div class="tri" style="left:267px;top:612px"></div>
<div class="c r" style="left:26px;width:77.60px;top:630px;font-size:14px;letter-spacing:-0.6px;">20</div>
<div class="c r" style="left:106px;width:77.60px;top:630px;font-size:14px;letter-spacing:-0.6px;">15</div>
<div class="c r" style="left:186px;width:77.60px;top:630px;font-size:14px;letter-spacing:-0.6px;">6</div>
<div class="c r" style="left:266px;width:77.60px;top:630px;font-size:14px;letter-spacing:-0.6px;">4</div>
<div class="c r" style="left:346px;width:77.60px;top:630px;font-size:14px;letter-spacing:-0.6px;">-2,250</div>
<div class="c r" style="left:426px;width:77.60px;top:630px;font-size:14px;letter-spacing:-0.6px;">50,150</div>
<div class="c r" style="left:506px;width:77.60px;top:630px;font-size:14px;letter-spacing:-0.6px;">50,150</div>
<div class="c r" style="left:586px;width:77.60px;top:630px;font-size:14px;letter-spacing:-0.6px;">-112,838</div>
<div class="tri" style="left:107px;top:629px"></div>
<div class="tri" style="left:187px;top:629px"></div>
<div class="tri" style="left:267px;top:629px"></div>
<div class="c r" style="left:346px;width:77.55px;top:664px;font-weight:bold;font-size:14px;letter-spacing:-0.55px;">Gesamt</div>
<div class="c r" style="left:426px;width:77.85px;top:664px;font-weight:bold;font-size:14px;letter-spacing:-0.85px;">1335,015</div>
<div class="c r" style="left:506px;width:77.85px;top:664px;font-weight:bold;font-size:14px;letter-spacing:-0.85px;">1413,436</div>
<div class="c r" style="left:586px;width:77.85px;top:664px;font-weight:bold;font-size:14px;letter-spacing:-0.85px;">655,701</div>
<div class="ab" style="left:27px;top:288px;width:640px;height:1px;background:#000"></div>
<div class="ab" style="left:27px;top:305px;width:640px;height:1px;background:#000"></div>
<div class="ab" style="left:106px;top:288px;width:1px;height:18px;background:#000"></div>
<div class="ab" style="left:186px;top:288px;width:1px;height:18px;background:#000"></div>
<div class="ab" style="left:266px;top:288px;width:1px;height:18px;background:#000"></div>
<div class="ab" style="left:346px;top:288px;width:1px;height:18px;background:#000"></div>
<div class="ab" style="left:426px;top:288px;width:1px;height:18px;background:#000"></div>
<div class="ab" style="left:506px;top:288px;width:1px;height:18px;background:#000"></div>
<div class="ab" style="left:586px;top:288px;width:1px;height:18px;background:#000"></div>
<div class="ab" style="left:666px;top:288px;width:1px;height:18px;background:#000"></div>
<div class="ab" style="left:25px;top:219px;width:83px;height:20px;border:2px solid #217346"></div>
<div class="ab" style="left:103px;top:234px;width:7px;height:7px;background:#217346;border:1px solid #fff"></div>
<div class="ab" style="left:747px;top:204px;width:20px;height:489px;background:#e6e6e6"></div>
<div class="ab" style="left:750px;top:221px;width:15px;height:457px;background:#d9d9d9"></div>
<div class="ab" style="left:750px;top:206px;width:15px;height:15px;background:#fff;border:1px solid #a8a8a8"></div>
<div class="ab" style="left:750px;top:220px;width:15px;height:258px;background:#fff;border:1px solid #a8a8a8"></div>
<div class="ab" style="left:750px;top:678px;width:15px;height:15px;background:#fff;border:1px solid #a8a8a8"></div>
<div class="ab" style="left:1px;top:693px;width:766px;height:27px;background:#e6e6e6"></div>
<div class="ab" style="left:1px;top:720px;width:766px;height:1px;background:#c6c6c6"></div>
<div class="ab" style="left:1px;top:721px;width:766px;height:21px;background:#f3f3f3"></div>
<div class="ab" style="left:101px;top:696px;width:1px;height:20px;background:#a8a8a8"></div>
<div class="t" style="left:114px;top:699px;font-size:13px;color:#444;letter-spacing:-0.3px">DA58 02</div>
<div class="ab" style="left:176px;top:696px;width:1px;height:20px;background:#a8a8a8"></div>
<div class="t" style="left:192px;top:699px;font-size:13px;color:#444;">Berechnungsprotokoll</div>
<div class="ab" style="left:336px;top:692px;width:56px;height:25px;background:#fff"></div>
<div class="ab" style="left:336px;top:692px;width:1px;height:24px;background:#a8a8a8"></div>
<div class="ab" style="left:337px;top:714px;width:55px;height:2px;background:#217346"></div>
<div class="clip" style="left:349px;top:699px;width:43px;height:16px;font-size:12.3px;font-weight:bold;color:#217346">Ergebnisse</div>
<div class="ab" style="left:478px;top:699px;width:269px;height:15px;background:#d9d9d9"></div>
<div class="ab" style="left:478px;top:699px;width:15px;height:15px;background:#fff;border:1px solid #c6c6c6"></div>
<div class="ab" style="left:492px;top:699px;width:210px;height:15px;background:#fff;border:1px solid #c6c6c6"></div>
<div class="ab" style="left:732px;top:699px;width:15px;height:15px;background:#fff;border:1px solid #c6c6c6"></div>
<div class="ab" style="left:454px;top:721px;width:40px;height:20px;background:#c8c8c8"></div>
<div class="ab" style="left:593px;top:730px;width:100px;height:1px;background:#b5b5b5"></div>
<div class="ab" style="left:641px;top:726px;width:5px;height:11px;background:#777"></div>
<div class="t" style="left:719px;top:726px;font-size:12px;color:#262626;letter-spacing:-0.6px">100 %</div>
<div class="ab" style="left:95px;top:35px;width:1px;height:30px;background:#4a8a66"></div>
<div class="ab" style="left:1px;top:64px;width:61px;height:1px;background:#10613a"></div>
<div class="ab" style="left:95px;top:64px;width:673px;height:1px;background:#10613a"></div>
<div class="ab" style="left:1px;top:65px;width:1px;height:677px;background:#ffffff"></div>
<div class="ab" style="left:767px;top:65px;width:1px;height:677px;background:#ffffff"></div>
<div class="ab" style="left:1px;top:741px;width:767px;height:1px;background:#ffffff"></div>
<div class="ab" style="left:0px;top:64px;width:1px;height:679px;background:#10613a"></div>
<div class="ab" style="left:768px;top:64px;width:1px;height:679px;background:#10613a"></div>
<div class="ab" style="left:0px;top:742px;width:769px;height:1px;background:#10613a"></div>
<svg width="769" height="743" viewBox="0 0 769 743"><rect x="23.75" y="11.75" width="12.5" height="12.5" fill="none" stroke="#ffffff" stroke-width="1.5"/><rect x="25" y="17.3" width="10" height="1.6" fill="#ffffff"/><rect x="26" y="19" width="8" height="6" fill="#ffffff"/><rect x="28.3" y="21.5" width="2.2" height="3" fill="#217346"/><g transform="translate(0 -1)"><path d="M54 17 h7 a4 4 0 0 1 0 8 h-2" fill="none" stroke="#6fa384" stroke-width="2"/><path d="M52 17 l4.5 -4.5 M52 17 l4.5 4.5" stroke="#6fa384" stroke-width="2"/></g><path d="M72 16 h5 l-2.5 2.5z" fill="#6fa384"/><g transform="translate(0 -1)"><path d="M100 17 h-7 a4 4 0 0 0 0 8 h2" fill="none" stroke="#6fa384" stroke-width="2"/><path d="M102 17 l-4.5 -4.5 M102 17 l-4.5 4.5" stroke="#6fa384" stroke-width="2"/></g><path d="M108 16 h5 l-2.5 2.5z" fill="#6fa384"/><rect x="127" y="15" width="7" height="1.3" fill="#ffffff"/><path d="M127 18 h7 l-3.5 3.5z" fill="#ffffff"/><rect x="548" y="4" width="24" height="24" fill="#b4b4b4"/><circle cx="560" cy="12.5" r="5" fill="#fff"/><path d="M551 28 q0 -9 9 -9 q9 0 9 9z" fill="#fff"/><rect x="600.5" y="11.5" width="13" height="9" fill="none" stroke="#ffffff"/><path d="M601 13.5 h12" stroke="#ffffff"/><path d="M607 19 v-4.5 M604.5 17 l2.5-2.5 l2.5 2.5" stroke="#ffffff" fill="none"/><path d="M648 16.5 h10" stroke="#ffffff"/><rect x="694.5" y="11.5" width="9" height="9" fill="none" stroke="#ffffff"/><path d="M740 11 l10 10 M750 11 l-10 10" stroke="#ffffff" stroke-width="1.1"/><path d="M603.5 53 v-2.5 q-3 -2.5 -3 -5.5 a5.5 5.5 0 0 1 11 0 q0 3 -3 5.5 v2.5z" fill="none" stroke="#ffffff" stroke-width="1.1"/><path d="M604 55.5 h4 M604.5 57.5 h3" stroke="#ffffff"/><circle cx="702" cy="46.5" r="4.3" fill="none" stroke="#ffffff" stroke-width="1.1"/><path d="M695.5 57.5 q0 -7 6.5 -7 q2.5 0 4 1" fill="none" stroke="#ffffff" stroke-width="1.1"/><path d="M706 54.5 h5 M708.5 52 v5" stroke="#ffffff" stroke-width="1.1"/><rect x="24" y="76" width="24" height="25" rx="2" fill="#eac47c"/><rect x="28" y="74" width="17" height="7" fill="#f7f7f7"/><rect x="29" y="76" width="14" height="4" fill="#6f6f6f"/><rect x="33" y="73" width="6" height="4" rx="1" fill="#6f6f6f"/><rect x="35" y="75" width="2" height="1.5" fill="#fff"/><path d="M37 83 h10 l5 5 v15 h-15z" fill="#f7f7f7"/><path d="M38.5 84.5 h8 l5 5 v13 h-13z" fill="#fff" stroke="#7a7a7a"/><path d="M46.5 84.5 v5 h5" fill="none" stroke="#7a7a7a"/><path d="M32 128 h6 l-3 3z" fill="#6f6f6f"/><path d="M69.5 71.5 L75.5 80 M76.5 71.5 L70.5 80" stroke="#6f6f6f" stroke-width="2"/><circle cx="69" cy="83" r="2.6" fill="none" stroke="#3a74ba" stroke-width="1"/><circle cx="77" cy="83" r="2.6" fill="none" stroke="#3a74ba" stroke-width="1"/><path d="M65.5 95.5 h5 l2 2 v8 h-7z" fill="#fff" stroke="#6f6f6f"/><path d="M67 99.5 h2 M67 101.5 h3 M67 103.5 h3" stroke="#3a74ba"/><path d="M71.5 98.5 h5.5 l2.5 2.5 v7.5 h-8z" fill="#fff" stroke="#6f6f6f"/><path d="M73 102.5 h2 M73 104.5 h5 M73 106.5 h5" stroke="#3a74ba"/><path d="M87 101 h5 l-2.5 3z" fill="#6f6f6f"/><path d="M79.5 117.8 L81.2 119.8 L77.8 123 L76 121z" fill="#6f6f6f"/><path d="M73.3 120 L79 125.3 L76.8 127.2 L71 122z" fill="#6f6f6f"/><path d="M65 124.5 L69.7 122.5 L75.9 128 L72.1 131.8z" fill="#e8bd6e"/><path d="M95.5 152 v-6.5 h6.5" fill="none" stroke="#7a7a7a"/><path d="M98 148 l4 4" fill="none" stroke="#333" stroke-dasharray="1 0.4"/><path d="M102.5 148.5 v4 h-4" fill="none" stroke="#222" stroke-width="1.1"/><path d="M193 78 h5 l-2.5 2.5z" fill="#6f6f6f"/><path d="M236 78 h5 l-2.5 2.5z" fill="#6f6f6f"/><path d="M124 97 h5.5 v1.8 h-3.5 v2 h3.2 v1.8 h-3.2 v3.4 h-2z" fill="#444"/><path d="M145.2 97 h2 l-0.8 3.6 l4 -3.6 h2.4 l-4.3 3.8 l2.6 5.2 h-2.3 l-1.9 -4 l-1 0.8 l-0.7 3.2 h-2z" fill="#444"/><path d="M165.5 97 h2 v5.5 q0 1.8 2.2 1.8 q2.2 0 2.2 -1.8 v-5.5 h2 v5.7 q0 3.4 -4.2 3.4 q-4.2 0 -4.2 -3.4z" fill="#444"/><path d="M184 101 h5 l-2.5 3z" fill="#6f6f6f"/><path d="M208.5 108 l4.2 -10 l4.2 10 M210.2 104.5 h5" fill="none" stroke="#555" stroke-width="1.5"/><path d="M231.3 108 l3.6 -8 l3.6 8 M232.8 105.3 h4.3" fill="none" stroke="#555" stroke-width="1.4"/><path d="M216 98 l2.6 -3 l2.6 3z" fill="#3a74ba"/><path d="M238 95 h5.2 l-2.6 3z" fill="#3a74ba"/><rect x="119" y="118" width="1" height="1" fill="#6b6b6b"/><rect x="119" y="124" width="1" height="1" fill="#6b6b6b"/><rect x="121" y="118" width="1" height="1" fill="#6b6b6b"/><rect x="121" y="124" width="1" height="1" fill="#6b6b6b"/><rect x="123" y="118" width="1" height="1" fill="#6b6b6b"/><rect x="123" y="124" width="1" height="1" fill="#6b6b6b"/><rect x="125" y="118" width="1" height="1" fill="#6b6b6b"/><rect x="125" y="124" width="1" height="1" fill="#6b6b6b"/><rect x="127" y="118" width="1" height="1" fill="#6b6b6b"/><rect x="127" y="124" width="1" height="1" fill="#6b6b6b"/><rect x="129" y="118" width="1" height="1" fill="#6b6b6b"/><rect x="129" y="124" width="1" height="1" fill="#6b6b6b"/><rect x="131" y="118" width="1" height="1" fill="#6b6b6b"/><rect x="131" y="124" width="1" height="1" fill="#6b6b6b"/><rect x="119" y="120" width="1" height="1" fill="#6b6b6b"/><rect x="119" y="122" width="1" height="1" fill="#6b6b6b"/><rect x="119" y="126" width="1" height="1" fill="#6b6b6b"/><rect x="119" y="128" width="1" height="1" fill="#6b6b6b"/><rect x="125" y="120" width="1" height="1" fill="#6b6b6b"/><rect x="125" y="122" width="1" height="1" fill="#6b6b6b"/><rect x="125" y="126" width="1" height="1" fill="#6b6b6b"/><rect x="125" y="128" width="1" height="1" fill="#6b6b6b"/><rect x="131" y="120" width="1" height="1" fill="#6b6b6b"/><rect x="131" y="122" width="1" height="1" fill="#6b6b6b"/><rect x="131" y="126" width="1" height="1" fill="#6b6b6b"/><rect x="131" y="128" width="1" height="1" fill="#6b6b6b"/><path d="M140 124 h5 l-2.5 3z" fill="#6f6f6f"/><path d="M163.8 124.2 l5.2 -5.2 l5.8 5.8 l-5.2 5.2z" fill="#fff" stroke="#666" stroke-width="1.2"/><path d="M167 122.5 v-4.5 q0 -1 1.2 -1 q1.2 0 1.2 1 v4" fill="none" stroke="#666" stroke-width="1.1"/><path d="M174.5 121 q3 1.5 2.8 4.5 q-0.5 2.5 -3 2.8z" fill="#3a74ba"/><path d="M183 124 h5 l-2.5 3z" fill="#6f6f6f"/><path d="M199.3 129 l4.2 -10 l4.2 10 M201 125 h5" fill="none" stroke="#555" stroke-width="1.9"/><path d="M217 124 h5 l-2.5 3z" fill="#6f6f6f"/><path d="M243.5 152 v-6.5 h6.5" fill="none" stroke="#7a7a7a"/><path d="M246 148 l4 4" fill="none" stroke="#333" stroke-dasharray="1 0.4"/><path d="M250.5 148.5 v4 h-4" fill="none" stroke="#222" stroke-width="1.1"/><rect x="266" y="71" width="14" height="1" fill="#5f5f5f"/><rect x="266" y="77" width="14" height="1" fill="#5f5f5f"/><rect x="268" y="74" width="10" height="1" fill="#5f5f5f"/><rect x="288" y="75" width="14" height="1" fill="#5f5f5f"/><rect x="288" y="81" width="14" height="1" fill="#5f5f5f"/><rect x="290" y="78" width="10" height="1" fill="#5f5f5f"/><rect x="310" y="80" width="14" height="1" fill="#5f5f5f"/><rect x="310" y="86" width="14" height="1" fill="#5f5f5f"/><rect x="312" y="83" width="10" height="1" fill="#5f5f5f"/><text x="335.3" y="79.2" font-family="Liberation Sans" font-weight="bold" font-size="10" fill="#555" letter-spacing="-0.3">ab</text><text x="335.5" y="86" font-family="Liberation Sans" font-weight="bold" font-size="10" fill="#555">c</text><path d="M346.8 80.8 v2.8 h-3.3 M344.8 82.2 l-1.3 1.4 l1.3 1.4" fill="none" stroke="#3a74ba" stroke-width="1"/><rect x="266" y="97" width="14" height="1" fill="#5f5f5f"/><rect x="288" y="97" width="14" height="1" fill="#5f5f5f"/><rect x="310" y="97" width="14" height="1" fill="#5f5f5f"/><rect x="266" y="100" width="10" height="1" fill="#5f5f5f"/><rect x="290" y="100" width="10" height="1" fill="#5f5f5f"/><rect x="314" y="100" width="10" height="1" fill="#5f5f5f"/><rect x="266" y="103" width="14" height="1" fill="#5f5f5f"/><rect x="288" y="103" width="14" height="1" fill="#5f5f5f"/><rect x="310" y="103" width="14" height="1" fill="#5f5f5f"/><rect x="266" y="106" width="10" height="1" fill="#5f5f5f"/><rect x="290" y="106" width="10" height="1" fill="#5f5f5f"/><rect x="314" y="106" width="10" height="1" fill="#5f5f5f"/><rect x="334.5" y="94.5" width="14" height="14" fill="#fff" stroke="#5f5f5f"/><path d="M334.5 98.5 h14 M334.5 104.5 h14 M341.5 94.5 v4 M341.5 104.5 v4" stroke="#5f5f5f"/><path d="M336.5 101.5 h10" stroke="#3a74ba"/><path d="M338.5 99.5 l-2 2 l2 2 M344.5 99.5 l2 2 l-2 2" fill="none" stroke="#3a74ba"/><path d="M356 101 h5 l-2.5 3z" fill="#6f6f6f"/><rect x="265" y="118" width="16" height="1" fill="#5f5f5f"/><rect x="287" y="118" width="16" height="1" fill="#5f5f5f"/><rect x="272" y="121" width="9" height="1" fill="#5f5f5f"/><rect x="294" y="121" width="9" height="1" fill="#5f5f5f"/><rect x="272" y="124" width="9" height="1" fill="#5f5f5f"/><rect x="294" y="124" width="9" height="1" fill="#5f5f5f"/><rect x="272" y="127" width="9" height="1" fill="#5f5f5f"/><rect x="294" y="127" width="9" height="1" fill="#5f5f5f"/><rect x="265" y="130" width="16" height="1" fill="#5f5f5f"/><rect x="287" y="130" width="16" height="1" fill="#5f5f5f"/><path d="M265 124.6 l3.5 -3 v2 h3 v2 h-3 v2z" fill="#3a74ba"/><path d="M293 124.6 l-3.5 -3 v2 h-3 v2 h3 v2z" fill="#3a74ba"/><text x="0" y="0" font-family="Liberation Sans" font-weight="bold" font-size="9.5" fill="#555" transform="translate(322.5 130) rotate(-50)">ab</text><path d="M325 132 l9 -10 M330.5 121.5 h3.8 v3.8" fill="none" stroke="#555" stroke-width="1.2"/><path d="M338 124 h5 l-2.5 3z" fill="#6f6f6f"/><path d="M362.5 152 v-6.5 h6.5" fill="none" stroke="#7a7a7a"/><path d="M365 148 l4 4" fill="none" stroke="#333" stroke-dasharray="1 0.4"/><path d="M369.5 148.5 v4 h-4" fill="none" stroke="#222" stroke-width="1.1"/><path d="M398 126 h5 l-2.5 3z" fill="#6f6f6f"/><rect x="440" y="72" width="12" height="11" fill="#fff"/><rect x="440" y="72" width="6" height="3.3" fill="#e0502a"/><path d="M440 76 H448 L446 79.3 H440z" fill="#3d7ac4"/><rect x="440" y="80" width="3.2" height="3" fill="#e0502a"/><path d="M448.5 72 v3.5 M446 75.5 h6" stroke="#aaa"/><path d="M446 83.5 H439.5 V71.5 H452.5 V76.5" fill="none" stroke="#666"/><rect x="445.5" y="78.5" width="9" height="8" fill="#fff" stroke="#666"/><path d="M448 81.5 h4.5 M448 83.5 h4.5 M451.5 80 l-2.5 5" stroke="#444" stroke-width="0.9"/><path d="M583 78 h5 l-2.5 2.5z" fill="#6f6f6f"/><rect x="440" y="95" width="14" height="12" fill="#fff"/><rect x="443" y="99" width="8" height="7" fill="#c5d9ee"/><path d="M442.5 95 v12 M446.5 95 v12 M450.5 95 v7 M440 98.5 h13 M440 102.5 h9" stroke="#a8a8a8"/><path d="M444.5 106.5 H439.5 V94.5 H454.5 V97" fill="none" stroke="#666"/><path d="M455.2 96.5 L455.4 102.5 L452.2 105.2 L449.6 102.8z" fill="#707070"/><path d="M441.5 110 Q443.5 105 448.8 104 L452.4 106.4 Q450.5 110 441.5 110z" fill="#3d7ac4"/><path d="M580 101 h5 l-2.5 2.5z" fill="#6f6f6f"/><rect x="440" y="118" width="14" height="12" fill="#fff"/><rect x="443" y="121" width="8" height="5" fill="#c5d9ee"/><path d="M442.5 118 v12 M450.5 118 v5 M440 120.5 h13 M440 126.5 h9" stroke="#a8a8a8"/><path d="M444.5 129.5 H439.5 V117.5 H454.5 V120" fill="none" stroke="#666"/><path d="M455.2 119.5 L455.4 125.5 L452.2 128.2 L449.6 125.8z" fill="#707070"/><path d="M441.5 133 Q443.5 128 448.8 127 L452.4 129.4 Q450.5 133 441.5 133z" fill="#3d7ac4"/><path d="M574 124 h5 l-2.5 2.5z" fill="#6f6f6f"/><path d="M622.5 76 v3 M634.5 76 v3 M624.5 77.5 h8" stroke="#3a74ba" stroke-width="1.1"/><path d="M626 75.8 l-1.8 1.7 l1.8 1.7 M631 75.8 l1.8 1.7 l-1.8 1.7" fill="none" stroke="#3a74ba" stroke-width="1.1"/><rect x="622.5" y="80.5" width="14" height="9" fill="#fff"/><path d="M622.5 83.5 h14 M622.5 86.5 h14 M625.5 80.5 v9 M629.5 80.5 v9 M633.5 80.5 v9" stroke="#b0b0b0"/><rect x="625.3" y="83" width="4.6" height="4" fill="#3a74ba"/><rect x="622.5" y="80.5" width="14" height="9" fill="none" stroke="#666"/><path d="M623 89.5 v1 q0 1 1 1 h3.5 q1 0 1 -1 M629 90.5 q0 1 1 1 h3 q1 0 1.5 -1" fill="none" stroke="#777"/><path d="M627 126 h5 l-2.5 3z" fill="#6f6f6f"/><circle cx="694.5" cy="82.5" r="3.5" fill="none" stroke="#3a74ba" stroke-width="1.6"/><path d="M691.5 85.5 l-4.5 4.5" stroke="#3a74ba" stroke-width="2.2" stroke-linecap="round"/><path d="M690 126 h5 l-2.5 3z" fill="#6f6f6f"/><path d="M751 152.5 l4.5 -4.5 l4.5 4.5" fill="none" stroke="#444" stroke-width="1.1"/><path d="M94 178 h7 l-3.5 4z" fill="#777"/><rect x="122" y="176" width="2" height="2" fill="#aaa"/><rect x="122" y="180" width="2" height="2" fill="#aaa"/><rect x="122" y="184" width="2" height="2" fill="#aaa"/><path d="M151.8 176.8 l10.4 9.4 M162.2 176.8 l-10.4 9.4" stroke="#bdbdbd" stroke-width="1.7"/><path d="M188 181.5 l3.8 4 l7.5 -9" fill="none" stroke="#c4c4c4" stroke-width="2.6"/><text x="223" y="184.5" font-family="Liberation Serif" font-style="italic" font-weight="bold" font-size="14" fill="#444">f</text><text x="228.3" y="184.5" font-family="Liberation Serif" font-style="italic" font-weight="bold" font-size="11" fill="#444">x</text><path d="M751 179 l3.5 3.5 l3.5 -3.5" fill="none" stroke="#666" stroke-width="2.2"/><path d="M15 217 l8 -8 v8z" fill="#b8b8b8"/><path d="M754 216 l3.5 -4 l3.5 4z" fill="#777"/><path d="M754 683 h7 l-3.5 4z" fill="#777"/><path d="M32.5 701.5 v7 l-4.5 -3.5z" fill="#217346"/><path d="M56.5 701.5 v7 l4.5 -3.5z" fill="#217346"/><rect x="82" y="707.5" width="2.6" height="2.6" fill="#217346"/><rect x="86" y="707.5" width="2.6" height="2.6" fill="#217346"/><rect x="90" y="707.5" width="2.6" height="2.6" fill="#217346"/><rect x="401" y="707.5" width="2.6" height="2.6" fill="#217346"/><rect x="405" y="707.5" width="2.6" height="2.6" fill="#217346"/><rect x="409" y="707.5" width="2.6" height="2.6" fill="#217346"/><circle cx="433" cy="706.3" r="7" fill="none" stroke="#777" stroke-width="1.2"/><path d="M429 706.3 h8 M433 702.3 v8" stroke="#777" stroke-width="1.6"/><rect x="461" y="701" width="2" height="2" fill="#aaa"/><rect x="461" y="705.5" width="2" height="2" fill="#aaa"/><rect x="461" y="710" width="2" height="2" fill="#aaa"/><path d="M489 703 v7 l-4 -3.5z" fill="#777"/><path d="M737 703 v7 l4 -3.5z" fill="#777"/><rect x="467.5" y="724.5" width="12" height="12" fill="none" stroke="#777"/><path d="M471.5 724.5 v12 M475.5 724.5 v12 M467.5 728.5 h12 M467.5 732.5 h12" stroke="#777"/><rect x="507.5" y="724.5" width="13" height="12" fill="none" stroke="#777"/><rect x="510.5" y="727.5" width="7" height="6" fill="none" stroke="#777"/><path d="M512 729.5 h4 M512 731.5 h4" stroke="#777"/><path d="M547.5 724.5 h13 v12 h-13z M547.5 731.5 h7 v-7 M551.5 724.5 v7" fill="none" stroke="#777"/><path d="M580 730.5 h8" stroke="#444" stroke-width="1.2"/><path d="M697 730.5 h9 M701.5 726 v9" stroke="#444" stroke-width="1.2"/></svg>
</body></html>
